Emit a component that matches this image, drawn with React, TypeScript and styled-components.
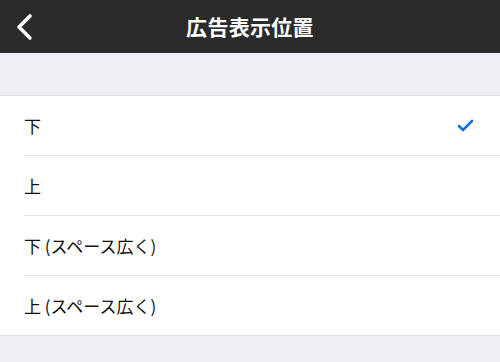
import React from "react";
import styled, { createGlobalStyle } from "styled-components";

const Global = createGlobalStyle`
  html, body { margin: 0; padding: 0; }
  body {
    background: #efeff4;
    font-family: "Noto Sans CJK JP", "Noto Sans", sans-serif;
    width: 500px;
    height: 362px;
    overflow: hidden;
  }
`;

const Page = styled.div`
  display: flex;
  flex-direction: column;
  width: 500px;
  height: 362px;
  background: #efeff4;
`;

const Header = styled.header`
  height: 53px;
  background: #2b2b2b;
  display: grid;
  grid-template-columns: 60px 1fr 60px;
  align-items: center;
  flex-shrink: 0;
`;

const BackButton = styled.button`
  border: none;
  background: transparent;
  padding: 0 0 0 14px;
  height: 53px;
  display: flex;
  align-items: center;
  cursor: pointer;
`;

const Title = styled.h1`
  margin: 0;
  color: #ffffff;
  font-size: 21px;
  font-weight: 700;
  text-align: center;
  letter-spacing: 0.3px;
  line-height: 1;
`;

const Spacer = styled.div<{ $h: number }>`
  height: ${(p) => p.$h}px;
  flex-shrink: 0;
`;

const List = styled.ul`
  list-style: none;
  margin: 0;
  padding: 0 0 0 24px;
  background: #ffffff;
  border-top: 1px solid #e0e0e4;
  border-bottom: 1px solid #e0e0e4;
`;

const Row = styled.li<{ $last?: boolean }>`
  height: 59px;
  display: flex;
  align-items: center;
  justify-content: space-between;
  padding-right: 26px;
  border-bottom: ${(p) => (p.$last ? "none" : "1px solid #e3e3e6")};
  font-size: 17px;
  color: #111111;
`;

const Label = styled.span`
  line-height: 1;
`;

const items = ["下", "上", "下 (スペース広く)", "上 (スペース広く)"];

export default function App() {
  return (
    <>
      <Global />
      <Page>
        <Header>
          <BackButton aria-label="戻る">
            <svg width="20" height="28" viewBox="0 0 20 28">
              <path
                d="M16 3 L5 14 L16 25"
                fill="none"
                stroke="#ffffff"
                strokeWidth="3.6"
                strokeLinecap="round"
                strokeLinejoin="round"
              />
            </svg>
          </BackButton>
          <Title>広告表示位置</Title>
          <div />
        </Header>
        <Spacer $h={42} />
        <List>
          {items.map((t, i) => (
            <Row key={t} $last={i === items.length - 1}>
              <Label>{t}</Label>
              {i === 0 && (
                <svg width="17" height="13" viewBox="0 0 17 13">
                  <path
                    d="M2 7 L6 11 L15 2"
                    fill="none"
                    stroke="#1a6fe0"
                    strokeWidth="2.6"
                    strokeLinecap="round"
                    strokeLinejoin="round"
                  />
                </svg>
              )}
            </Row>
          ))}
        </List>
      </Page>
    </>
  );
}
